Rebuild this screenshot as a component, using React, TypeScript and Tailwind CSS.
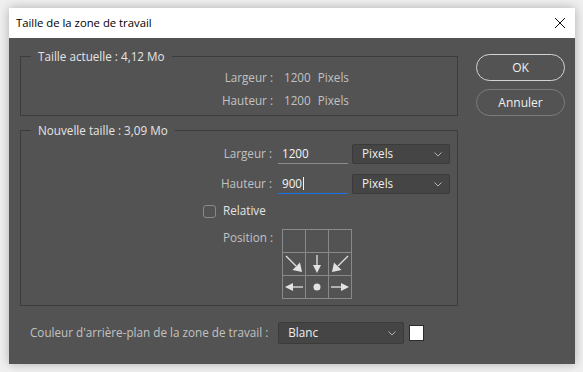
import React from "react";

// ========== Small pieces ==========

const FONT = { fontFamily: '"Open Sans", "Noto Sans", sans-serif' };

function Chevron() {
  return (
    <svg width="8" height="5" viewBox="0 0 8 5" className="shrink-0">
      <path d="M0.5 0.5 L4 4 L7.5 0.5" fill="none" stroke="#b4b4b4" strokeWidth="1" />
    </svg>
  );
}

function Select({ value, width, height }: { value: string; width: string; height: string }) {
  return (
    <div
      className={`${width} ${height} bg-[#454545] border border-[#3b3b3b] rounded-[2px] flex items-center justify-between pl-[9px] pr-[7px] text-[#eeeeee] text-[11.7px]`}
    >
      <span>{value}</span>
      <Chevron />
    </div>
  );
}

// flèches de la grille d'ancrage
function Arrow({ dir }: { dir: "se" | "s" | "sw" | "w" | "e" | "dot" | "none" }) {
  if (dir === "none") return null;
  const c = "#e2e2e2";
  return (
    <svg width="22" height="22" viewBox="0 0 22 22">
      {dir === "dot" && <circle cx="11" cy="11" r="3.5" fill={c} />}
      {dir === "s" && (
        <>
          <line x1="11" y1="2" x2="11" y2="13" stroke={c} strokeWidth="1.3" />
          <polygon points="7,12 15,12 11,20" fill={c} />
        </>
      )}
      {dir === "se" && (
        <>
          <line x1="3" y1="3" x2="13" y2="13" stroke={c} strokeWidth="1.3" />
          <polygon points="9.5,17 17,9.5 19,19" fill={c} />
        </>
      )}
      {dir === "sw" && (
        <>
          <line x1="19" y1="3" x2="9" y2="13" stroke={c} strokeWidth="1.3" />
          <polygon points="12.5,17 5,9.5 3,19" fill={c} />
        </>
      )}
      {dir === "w" && (
        <>
          <line x1="9" y1="11" x2="20" y2="11" stroke={c} strokeWidth="1.3" />
          <polygon points="10,7 10,15 2,11" fill={c} />
        </>
      )}
      {dir === "e" && (
        <>
          <line x1="2" y1="11" x2="13" y2="11" stroke={c} strokeWidth="1.3" />
          <polygon points="12,7 12,15 20,11" fill={c} />
        </>
      )}
    </svg>
  );
}

const ANCHORS: ("se" | "s" | "sw" | "w" | "e" | "dot" | "none")[] = [
  "none", "none", "none",
  "se", "s", "sw",
  "w", "dot", "e",
];

// ========== Main Component ==========

export default function App() {
  return (
    <div className="w-[583px] h-[372px] bg-[#f0f0f0] pt-[8px] pl-[9px]" style={FONT}>
      <div className="w-[566px] h-[356px] flex flex-col shadow-[0_0_10px_rgba(0,0,0,0.28)]">
        {/* Barre de titre */}
        <div className="h-[30px] bg-white flex items-center justify-between pl-[7px] pr-[10px]">
          <span className="text-[11.3px] text-black">Taille de la zone de travail</span>
          <svg width="10" height="10" viewBox="0 0 10 10">
            <path d="M0 0 L10 10 M10 0 L0 10" stroke="#111" strokeWidth="1" />
          </svg>
        </div>

        {/* Corps */}
        <div className="flex-1 bg-[#535353] flex pl-[11px] text-[11.7px]">
          <div className="w-[438px] pt-[10px] flex flex-col">
            {/* Taille actuelle */}
            <fieldset className="border border-[#3c3c3c] pl-[10px] pt-[2px] pb-[3px]">
              <legend className="px-[7px] leading-[16px] text-[#e4e4e4]">Taille actuelle : 4,12 Mo</legend>
              {[
                ["Largeur :", "1200"],
                ["Hauteur :", "1200"],
              ].map(([label, v]) => (
                <div key={label} className="h-[23px] flex items-center text-[#c2c2c2]">
                  <span className="w-[242px] text-right">{label}</span>
                  <span className="ml-[11px]">{v}</span>
                  <span className="ml-[7px]">Pixels</span>
                </div>
              ))}
            </fieldset>

            {/* Nouvelle taille */}
            <fieldset className="mt-[6px] border border-[#3c3c3c] pl-[10px] pt-[6px] pb-[6px]">
              <legend className="px-[7px] leading-[16px] text-[#e4e4e4]">Nouvelle taille : 3,09 Mo</legend>
              <div className="h-[20px] flex items-center">
                <span className="w-[241px] text-right text-[#c2c2c2]">Largeur :</span>
                <div className="ml-[6px] w-[70px] h-[19px] border-b border-[#8c8c8c] pl-[4px] flex items-center text-[#f4f4f4]">
                  1200
                </div>
                <div className="ml-[4px]">
                  <Select value="Pixels" width="w-[98px]" height="h-[20px]" />
                </div>
              </div>
              <div className="mt-[10px] h-[20px] flex items-center">
                <span className="w-[241px] text-right text-[#c2c2c2]">Hauteur :</span>
                <div className="ml-[6px] w-[70px] h-[19px] border-b border-[#1a73e8] pl-[4px] flex items-center text-[#f4f4f4]">
                  900
                  <span className="w-px h-[13px] bg-[#f4f4f4] ml-px" />
                </div>
                <div className="ml-[4px]">
                  <Select value="Pixels" width="w-[98px]" height="h-[20px]" />
                </div>
              </div>

              <div className="mt-[9px] h-[16px] flex items-center pl-[172px]">
                <span className="w-[13px] h-[13px] border border-[#8a8a8a] rounded-[3px]" />
                <span className="ml-[7px] text-[#e4e4e4]">Relative</span>
              </div>

              <div className="mt-[10px] flex items-start">
                <span className="w-[242px] text-right leading-[16px] text-[#c2c2c2]">Position :</span>
                <div className="ml-[9px] grid grid-cols-3 border-l border-t border-[#8a8a8a]">
                  {ANCHORS.map((d, i) => (
                    <div
                      key={i}
                      className="w-[23px] h-[23px] border-r border-b border-[#8a8a8a] flex items-center justify-center"
                    >
                      <Arrow dir={d} />
                    </div>
                  ))}
                </div>
              </div>
            </fieldset>

            {/* Couleur d'arrière-plan */}
            <div className="mt-[16px] pl-[10px] flex items-center">
              <span className="text-[#c2c2c2]">Couleur d'arrière-plan de la zone de travail :</span>
              <div className="ml-[10px]">
                <Select value="Blanc" width="w-[126px]" height="h-[22px]" />
              </div>
              <span className="ml-[5px] w-[15px] h-[16px] bg-white border border-[#2c2c2c]" />
            </div>
          </div>

          {/* Boutons */}
          <div className="ml-[18px] pt-[16px] w-[89px] flex flex-col gap-[8px]">
            <button className="h-[27px] rounded-full border-[1.5px] border-[#d4d4d4] text-[#f0f0f0] text-[12px]">
              OK
            </button>
            <button className="h-[27px] rounded-full border-[1.5px] border-[#7c7c7c] text-[#f0f0f0] text-[12px]">
              Annuler
            </button>
          </div>
        </div>
      </div>
    </div>
  );
}
